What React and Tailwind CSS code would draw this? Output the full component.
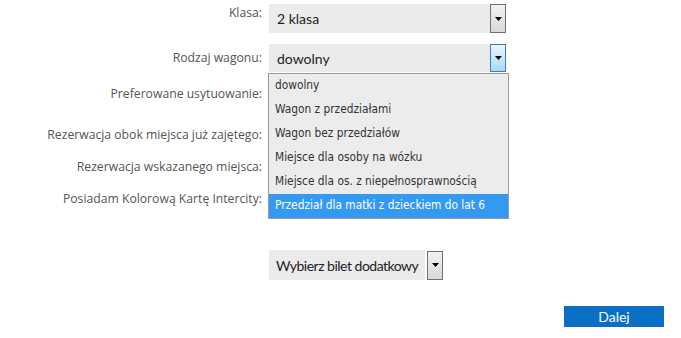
import React from 'react'

const labelCls = "w-[262px] shrink-0 text-right text-[12.2px] text-[#555] font-['Open_Sans',sans-serif]"

function Arrow({ active }) {
  return (
    <div
      className={
        active
          ? 'flex h-[28px] w-[16px] items-center justify-center border border-[#3c7fb1] bg-gradient-to-b from-[#eaf6fd] to-[#a7d9f5]'
          : 'flex h-[29px] w-[16px] items-center justify-center border border-[#707070] bg-gradient-to-b from-[#f2f2f2] to-[#d8d8d8]'
      }
    >
      <svg width="7" height="4" viewBox="0 0 7 4">
        <path d="M0 0h7L3.5 4z" fill="#000" />
      </svg>
    </div>
  )
}

function Row({ label, className, children }) {
  return (
    <div className={'flex items-center ' + (className || '')}>
      <div className={labelCls}>{label}</div>
      <div className="ml-[7px] flex items-center">{children}</div>
    </div>
  )
}

const options = [
  'dowolny',
  'Wagon z przedziałami',
  'Wagon bez przedziałów',
  'Miejsce dla osoby na wózku',
  'Miejsce dla os. z niepełnosprawnością',
  'Przedział dla matki z dzieckiem do lat 6',
]

export default function App() {
  return (
    <div className="relative h-[338px] w-[681px] overflow-hidden bg-white pt-[4px]">
      <Row label="Klasa:" className="h-[29px] items-start">
        <div className="flex h-[29px] w-[221px] items-center bg-[#ebebeb] pl-[8px] text-[14px] text-[#222] font-['Lato',sans-serif]">
          2 klasa
        </div>
        <Arrow />
      </Row>

      <Row label="Rodzaj wagonu:" className="mt-[11px] h-[28px]">
        <div className="relative flex h-[28px] w-[221px] items-center bg-[#ebebeb] pl-[8px] text-[14px] text-[#222] font-['Lato',sans-serif]">
          dowolny
          <ul className="absolute left-[-1px] top-[29px] z-10 w-[241px] border border-[#9a9a9a] bg-[#ececec] text-[11.8px] text-[#333] font-['DejaVu_Sans_Condensed','DejaVu_Sans',sans-serif]">
            {options.map((o, i) => (
              <li
                key={o}
                className={
                  'flex h-[24px] items-center pl-[6px] ' +
                  (i === options.length - 1 ? 'bg-[#3399f3] text-white' : '')
                }
              >
                {o}
              </li>
            ))}
          </ul>
        </div>
        <Arrow active />
      </Row>

      <Row label="Preferowane usytuowanie:" className="mt-[7px] h-[30px]" />
      <Row label="Rezerwacja obok miejsca już zajętego:" className="mt-[11px] h-[30px]" />
      <Row label="Rezerwacja wskazanego miejsca:" className="mt-[2px] h-[30px]" />
      <Row label="Posiadam Kolorową Kartę Intercity:" className="mt-[2px] h-[30px]" />

      <div className="mt-[36px] flex items-center pl-[269px]">
        <div className="flex h-[30px] items-center bg-[#ebebeb] px-[7px] text-[14px] tracking-[-0.5px] text-[#222] font-['Lato',sans-serif]">
          Wybierz bilet dodatkowy
        </div>
        <div className="ml-[2px]">
          <Arrow />
        </div>
      </div>

      <div className="mt-[26px] flex justify-end pr-[17px]">
        <button className="h-[21px] w-[100px] bg-[#0a6fc4] text-[14px] text-white font-['Lato',sans-serif]">
          Dalej
        </button>
      </div>
    </div>
  )
}
